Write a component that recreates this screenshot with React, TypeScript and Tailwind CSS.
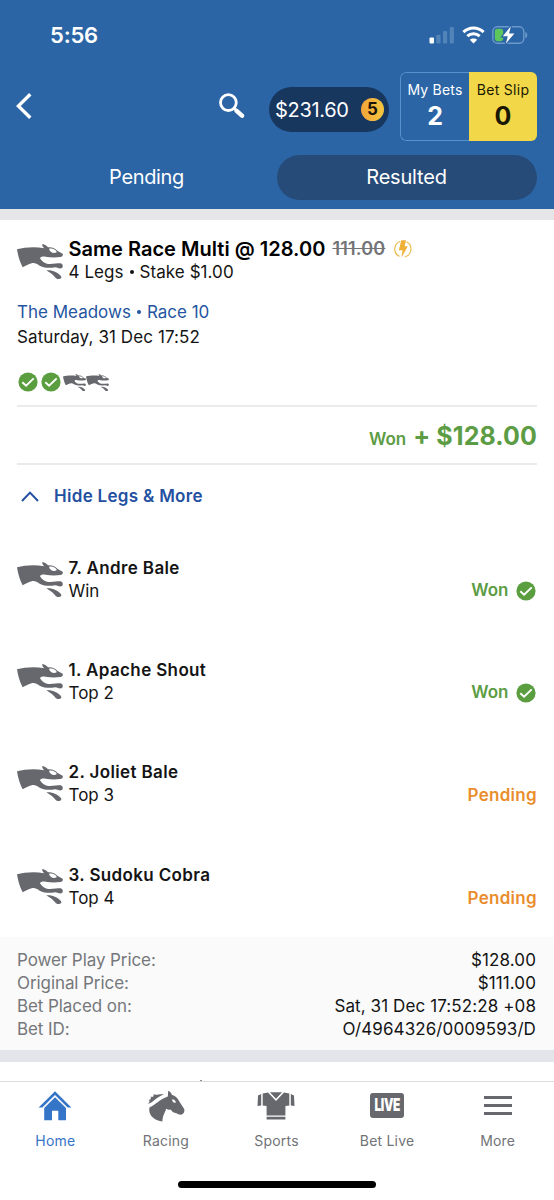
import React from 'react';

const legs = [
  { name: '7. Andre Bale', market: 'Win', won: true },
  { name: '1. Apache Shout', market: 'Top 2', won: true },
  { name: '2. Joliet Bale', market: 'Top 3', won: false },
  { name: '3. Sudoku Cobra', market: 'Top 4', won: false },
];

const details = [
  { label: 'Power Play Price:', value: '$128.00' },
  { label: 'Original Price:', value: '$111.00' },
  { label: 'Bet Placed on:', value: 'Sat, 31 Dec 17:52:28 +08' },
  { label: 'Bet ID:', value: 'O/4964326/0009593/D' },
];

const Greyhound = ({ className }: { className: string }) => (
  <svg viewBox="0 0 138 105" preserveAspectRatio="none" className={className} fill="#66686d">
    <path
      fillRule="evenodd"
      d="M0 16C22 11 50 7 82 13C78 9 75 5 76 0C83 2 90 5 93 10C105 9 115 13 122 21L137 29C139 34 136 38 130 39C117 41 100 41 86 38C76 37 70 39 69 43C74 52 83 58 93 60C107 61 120 58 131 58C139 60 139 70 133 73C126 75 121 70 114 70C99 73 82 72 68 65C59 58 51 56 44 58C34 60 27 65 17 70C8 53 3 35 0 16ZM96 14C98 23 108 30 119 25C120 19 108 12 96 14Z"
    />
    <path d="M88 79C106 77 123 86 131 95C136 101 131 105 124 105C115 104 115 99 110 95C105 89 97 86 88 79Z" />
  </svg>
);

const CheckBadge = () => (
  <svg viewBox="0 0 20 20" className="size-[20px]">
    <circle cx="10" cy="10" r="9.6" fill="#5a9e3f" />
    <path d="M4.3 10.2L8.1 13.8L15.7 6.4" fill="none" stroke="#fff" strokeWidth="1.9" />
  </svg>
);

const StatusBar = () => (
  <div className="flex h-[72px] items-start justify-between pt-[20px] pr-[26px] pl-[50px]">
    <span className="text-[22px] leading-[30px] font-semibold tracking-[-0.2px]">5:56</span>
    <div className="flex items-center pt-[6px]">
      <svg viewBox="0 0 26 18" className="mr-[7px] h-[18px] w-[26px]">
        <rect x="0.5" y="11.5" width="4.5" height="6" rx="1" fill="#fff" />
        <rect x="7.3" y="8.7" width="4.2" height="8.8" rx="1" fill="#5284ba" />
        <rect x="14" y="5" width="4.2" height="12.5" rx="1" fill="#5284ba" />
        <rect x="20.7" y="1" width="4.2" height="16.5" rx="1" fill="#5284ba" />
      </svg>
      <svg viewBox="0 0 23 18" className="mr-[7px] h-[18px] w-[23px]" fill="none" stroke="#fff" strokeWidth="3">
        <path d="M1.4 6.2C7.2 0.6 15.8 0.6 21.6 6.2" />
        <path d="M5.3 10.2C8.9 6.9 14.1 6.9 17.7 10.2" />
        <path d="M11.5 17.5L7.8 13.8C9.8 12 13.2 12 15.2 13.8Z" fill="#fff" stroke="none" />
      </svg>
      <svg viewBox="0 0 36 18" className="h-[18px] w-[36px]">
        <rect x="0.8" y="0.8" width="31" height="16.4" rx="4.6" fill="none" stroke="#6d9acb" strokeWidth="1.4" />
        <rect x="2.8" y="2.8" width="8.4" height="12.4" rx="2.4" fill="#5cc55c" />
        <path d="M33.3 6V12.2C36 11.2 36 7 33.3 6Z" fill="#6d9acb" />
        <path d="M18.8 0.3L10.8 10.3H15.8L13.8 17.7L22.4 7.6H17.1Z" fill="#fff" stroke="#2b65a6" strokeWidth="2.4" paintOrder="stroke" />
      </svg>
    </div>
  </div>
);

const Header = () => (
  <header className="h-[209px] bg-[#2b65a6] text-white">
    <StatusBar />
    <div className="flex h-[69px] pr-[17px] pl-[16px]">
      <svg viewBox="0 0 16 26" className="mt-[21px] h-[26px] w-[16px]" fill="none" stroke="#fff" strokeWidth="3.4">
        <path d="M14.3 1.2L2.3 13L14.3 24.8" />
      </svg>
      <svg viewBox="0 0 26 26" className="mt-[21px] ml-[187px] size-[26px]" fill="none" stroke="#fff">
        <circle cx="9.4" cy="9.6" r="7.9" strokeWidth="2.8" />
        <path d="M14.8 14.8L18 18" strokeWidth="2.4" />
        <path d="M17.6 17.8L23 22.7" strokeWidth="4.4" strokeLinecap="round" />
      </svg>
      <div className="mt-[15px] ml-[24px] flex h-[45px] w-[120px] items-center justify-between rounded-full bg-[#18375f] pr-[5px] pl-[6px]">
        <span className="text-[20px] leading-[28px] tracking-[-0.3px]">$231.60</span>
        <span className="flex size-[23px] items-center justify-center rounded-full bg-gradient-to-r from-[#f3a43b] to-[#f4c63f] text-[17px] font-bold text-[#1c1608]">
          5
        </span>
      </div>
      <div className="ml-[11px] flex h-[69px] w-[137px] overflow-hidden rounded-[6px] text-center">
        <div className="w-[69px] rounded-l-[6px] border border-r-0 border-[#5792cd] pt-[7px]">
          <div className="text-[14px] leading-[20px] tracking-[0.2px] whitespace-nowrap">My Bets</div>
          <div className="text-[25px] leading-[32px] font-bold">2</div>
        </div>
        <div className="w-[68px] bg-[#f2d848] pt-[8px] text-[#1a1705]">
          <div className="text-[14px] leading-[20px] tracking-[0.3px] whitespace-nowrap">Bet Slip</div>
          <div className="text-[25px] leading-[32px] font-bold">0</div>
        </div>
      </div>
    </div>
    <div className="mt-[14px] flex h-[45px] pr-[17px] pl-[17px] text-[20px] leading-[44px]">
      <div className="w-[259px] text-center tracking-[-0.35px]">Pending</div>
      <div className="ml-[1px] w-[260px] rounded-full bg-[#264b78] pr-[1px] text-center tracking-[-0.2px]">Resulted</div>
    </div>
  </header>
);

const Dot = () => <span className="mx-[6px] inline-block size-[4px] rounded-full bg-current align-[4px]" />;

const BetCard = () => (
  <section className="h-[717px] px-[17px] pt-[16px] text-[#141414]">
    <div className="flex h-[48px]">
      <Greyhound className="mt-[8px] h-[35px] w-[46px]" />
      <div className="ml-[5.5px] whitespace-nowrap">
        <div className="flex h-[24px] items-center pt-[1px]">
          <span className="text-[20px] leading-[24px] font-semibold tracking-[0.02px] text-black">Same Race Multi @ 128.00</span>
          <span className="ml-[7px] text-[18px] leading-[24px] font-semibold tracking-[0.2px] text-[#737477] line-through">111.00</span>
          <svg viewBox="0 0 18 18" className="ml-[9px] size-[18px]" fill="none">
            <path d="M6.3 1.2A8.2 8.2 0 0 0 5.5 16.4M12.5 1.7A8.2 8.2 0 0 1 10.6 17" stroke="#ebbc50" strokeWidth="1.2" />
            <path d="M7.3 0.3H12L10.6 6.2H13.8L7.4 17.8L8.6 10.3H4.8Z" fill="#eeb037" />
          </svg>
        </div>
        <div className="text-[17px] leading-[24px] tracking-[0.06px]">
          4 Legs
          <Dot />
          Stake $1.00
        </div>
      </div>
    </div>
    <div className="mt-[16px] text-[17px] leading-[25px] text-[#2455a0]">
      The Meadows
      <Dot />
      Race 10
    </div>
    <div className="text-[17px] leading-[25px] tracking-[0.1px]">Saturday, 31 Dec 17:52</div>
    <div className="mt-[21px] flex h-[22px] items-center gap-[3px] pl-[1px]">
      <CheckBadge />
      <CheckBadge />
      <div className="-ml-[1px] flex">
        <Greyhound className="h-[17px] w-[23px]" />
        <Greyhound className="h-[17px] w-[23px]" />
      </div>
    </div>
    <div className="mt-[12px] flex h-[60px] items-baseline justify-end border-y-2 border-[#ebebed] font-bold text-[#5c9c44]">
      <span className="text-[17px] leading-[58px] font-semibold">Won</span>
      <span className="ml-[7px] text-[25px] leading-[58px] tracking-[0.1px]">+ $128.00</span>
    </div>
    <div className="flex h-[63px] items-center pt-[1px] text-[17px] font-semibold tracking-[0.3px] text-[#2350a0]">
      <svg viewBox="0 0 18 11" className="mr-[15px] -mt-[1px] ml-[4px] h-[11px] w-[18px]" fill="none" stroke="#2350a0" strokeWidth="2">
        <path d="M1 10L9 1.6L17 10" />
      </svg>
      <span>Hide Legs &amp; More</span>
    </div>
    {legs.map((leg) => (
      <div key={leg.name} className="flex h-[102.3px] items-center">
        <Greyhound className="h-[35px] w-[46px]" />
        <div className="ml-[5.5px] flex-1 pt-[1px]">
          <div className="text-[17px] leading-[23px] font-semibold tracking-[0.36px]">{leg.name}</div>
          <div className="text-[17px] leading-[23px]">{leg.market}</div>
        </div>
        {leg.won ? (
          <div className="flex items-center gap-[7px] pt-[23px] pr-[1.5px] text-[17px] leading-[23px] font-semibold text-[#5c9c44]">
            <span>Won</span>
            <CheckBadge />
          </div>
        ) : (
          <div className="pt-[24px] text-[17px] leading-[23px] font-semibold tracking-[0.3px] text-[#e98d2d]">Pending</div>
        )}
      </div>
    ))}
  </section>
);

const tabs = [
  {
    label: 'Home',
    icon: (
      <svg viewBox="0 0 34 32" className="h-[32px] w-[34px]" fill="#3575c8">
        <path d="M17 1.3L33.4 17.6H29.6L17 5.1L4.4 17.6H0.6Z" />
        <path d="M17 7.2L28 18V30.2H20.3V20.8H14V30.2H6.2V18Z" />
      </svg>
    ),
  },
  {
    label: 'Racing',
    icon: (
      <svg viewBox="0 0 38 32" className="h-[32px] w-[38px]" fill="#66686d">
        <path
          fillRule="evenodd"
          d="M2.6 17.2C7.5 15.2 13 9.2 20.8 6.4C21.2 4.2 20.9 2.5 21.3 0.8C23.3 1.8 24.5 3.2 24.8 4.8C28.2 6 31 8 32 11L37.2 19C38.2 22.5 35.5 25.2 32.5 24.6C30.5 24.2 30 23.4 28.4 23C26 22.5 24.8 21 23.5 19.5C21 20.2 20 19.3 19 18.8C19 21.5 15.6 24.5 15.4 31.5C7.5 30.5 0.5 25 2.6 17.2ZM25.2 9.2C25 12 26.8 13.5 28.8 12.5C28.9 10.9 27.2 9.3 25.2 9.2Z"
        />
        <path d="M0.6 13.8C2.3 12.8 3 11.8 2 9.8C4.1 9.8 4.2 8.3 3.6 6.6C6 7.6 7 6.1 6.6 4.2C9.5 5.5 12 3.6 17.2 4.3C11.5 6.2 8 9.6 5.4 11.8C4 13 2.5 13.3 0.6 13.8Z" />
      </svg>
    ),
  },
  {
    label: 'Sports',
    icon: (
      <svg viewBox="0 0 38 32" className="h-[32px] w-[38px]" fill="#66686d">
        <path d="M1 5.4L4.2 4V15.5L0.5 16.1ZM37 5.4L33.8 4V15.5L37.5 16.1ZM5.7 3.6L11 2.4L19 11L27 2.4L32.3 3.6V15.6L28.4 16V25.4H9.6V16L5.7 15.6ZM12.9 2.3H25.1L19 8.8ZM9.6 26.8H28.4V29.4H9.6Z" />
      </svg>
    ),
  },
  {
    label: 'Bet Live',
    icon: (
      <div className="mt-[3px] flex h-[25px] w-[34px] items-center justify-center rounded-[3px] bg-[#66686d]">
        <span className="scale-x-[0.7] text-[17px] leading-[25px] font-black tracking-[-0.5px] text-white">LIVE</span>
      </div>
    ),
  },
  {
    label: 'More',
    icon: (
      <div className="mt-[6px] ml-[1px] flex flex-col gap-[5px]">
        <div className="h-[3px] w-[28px] bg-[#66686d]" />
        <div className="h-[3px] w-[28px] bg-[#66686d]" />
        <div className="h-[3px] w-[28px] bg-[#66686d]" />
      </div>
    ),
  },
];

const App = () => {
  return (
    <div className="h-[1200px] w-[554px] overflow-hidden bg-white font-['Inter',sans-serif]">
      <Header />
      <div className="h-[11px] bg-[#e6e6e9]" />
      <BetCard />
      <section className="h-[113px] bg-[#fafafa] pt-[12px] pr-[18px] pl-[17px] text-[17px] leading-[22.9px]">
        {details.map((row) => (
          <div key={row.label} className="flex justify-between">
            <span className="tracking-[-0.08px] text-[#75777b]">{row.label}</span>
            <span className="tracking-[0.1px] text-[#141414]">{row.value}</span>
          </div>
        ))}
      </section>
      <div className="h-[12px] bg-[#e4e5eb]" />
      {/* top edge of the next bet peeking out above the tab bar */}
      <div className="flex h-[19px] items-end bg-white pl-[200px]">
        <div className="h-[1px] w-[2px] bg-[#8a8b8f]" />
      </div>
      <nav className="flex h-[119px] flex-col items-center border-t border-[#dcdcdf]">
        <div className="grid h-[103px] w-full grid-cols-5 pr-[1px]">
          {tabs.map((tab) => (
            <div key={tab.label} className="flex flex-col items-center pt-[8px]">
              <div className="flex h-[41px] items-start">{tab.icon}</div>
              <span
                className={
                  tab.label === 'Home'
                    ? 'text-[14px] leading-[20px] tracking-[0.2px] text-[#3575c8]'
                    : 'text-[14px] leading-[20px] tracking-[0.2px] text-[#717377]'
                }
              >
                {tab.label}
              </span>
            </div>
          ))}
        </div>
        <div className="-mt-[4px] h-[7px] w-[198px] shrink-0 rounded-full bg-black" />
      </nav>
    </div>
  );
};

export default App;
